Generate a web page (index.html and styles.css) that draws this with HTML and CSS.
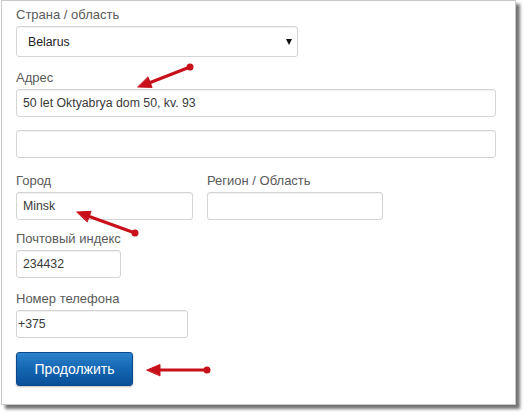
FILE: index.html
```html
<!DOCTYPE html>
<html lang="ru">
<head>
<meta charset="utf-8">
<title>Адрес</title>
<link rel="stylesheet" href="styles.css">
</head>
<body>
<div class="frame">
  <form class="form">
    <div class="group">
      <label class="label">Страна / область</label>
      <div class="select-wrap">
        <select class="control select"><option>Belarus</option></select>
      </div>
    </div>
    <div class="group group--tight">
      <label class="label">Адрес</label>
      <input class="control control--wide" type="text" value="50 let Oktyabrya dom 50, kv. 93">
    </div>
    <div class="group group--loose">
      <input class="control control--wide" type="text" value="">
    </div>
    <div class="row group group--short">
      <div class="col">
        <label class="label">Город</label>
        <input class="control control--city" type="text" value="Minsk">
      </div>
      <div class="col">
        <label class="label">Регион / Область</label>
        <input class="control control--region" type="text" value="">
      </div>
    </div>
    <div class="group">
      <label class="label">Почтовый индекс</label>
      <input class="control control--zip" type="text" value="234432">
    </div>
    <div class="group group--loose">
      <label class="label">Номер телефона</label>
      <input class="control control--phone" type="text" value="+375">
    </div>
    <button class="btn" type="button">Продолжить</button>
  </form>
</div>
<svg class="arrows" width="530" height="418" viewBox="0 0 530 418" aria-hidden="true">
  <g fill="#c8101a" stroke="#c8101a" stroke-linecap="round">
    <line x1="190" y1="67" x2="149" y2="83" stroke-width="3"/>
    <circle cx="190" cy="67" r="3.5" stroke="none"/>
    <polygon points="138,87 152.1,87.4 148.1,77.2" stroke-width="1" stroke-linejoin="round"/>

    <line x1="135" y1="233" x2="88" y2="216" stroke-width="3"/>
    <circle cx="135" cy="233" r="3.5" stroke="none"/>
    <polygon points="77,212 91.1,211.3 87.3,221.6" stroke-width="1" stroke-linejoin="round"/>

    <line x1="207" y1="370" x2="158" y2="370" stroke-width="3"/>
    <circle cx="207" cy="370" r="3.5" stroke="none"/>
    <polygon points="147,370 160,364.5 160,375.5" stroke-width="1" stroke-linejoin="round"/>
  </g>
</svg>
</body>
</html>
```
FILE: styles.css
```css
html, body {
  margin: 0;
  padding: 0;
  background: #ffffff;
}

body {
  position: relative;
  width: 530px;
  height: 418px;
  overflow: hidden;
  font-family: "Liberation Sans", Arial, sans-serif;
}

.frame {
  margin-left: 1px;
  width: 513px;
  height: 403px;
  border: 1px solid #c9c9c9;
  background: #ffffff;
  box-shadow: 4px 4px 3px rgba(0, 0, 0, 0.55);
}

.form {
  display: flex;
  flex-direction: column;
  align-items: flex-start;
  padding: 5px 0 0 14px;
}

.group {
  display: flex;
  flex-direction: column;
  margin-bottom: 12px;
}

.group--tight { margin-bottom: 13px; }
.group--loose { margin-bottom: 14px; }
.group--short { margin-bottom: 10px; }

.row {
  flex-direction: row;
  gap: 14px;
}

.col {
  display: flex;
  flex-direction: column;
}

.label {
  font-size: 13px;
  line-height: 18px;
  color: #5a5a5a;
  margin-bottom: 2px;
}

.control {
  box-sizing: border-box;
  height: 28px;
  margin: 0;
  padding: 0 6px;
  border: 1px solid #d4d4d4;
  border-radius: 3px;
  background: #fff;
  box-shadow: inset 0 1px 1px rgba(0, 0, 0, 0.06);
  font-family: "Liberation Sans", Arial, sans-serif;
  font-size: 12.3px;
  color: #3a3a3a;
  outline: none;
}

.select-wrap {
  position: relative;
  width: 282px;
}

.select-wrap::after {
  content: "";
  position: absolute;
  right: 6px;
  top: 13px;
  border-left: 3.5px solid transparent;
  border-right: 3.5px solid transparent;
  border-top: 6px solid #111;
}

.select {
  -webkit-appearance: none;
  appearance: none;
  width: 282px;
  height: 31px;
  padding: 0 0 0 11px;
  color: #222;
}

.control--wide { width: 480px; }
.control--city { width: 177px; }
.control--region { width: 176px; }
.control--zip { width: 105px; }
.control--phone { width: 172px; padding-left: 1px; }

.btn {
  box-sizing: border-box;
  width: 117px;
  height: 34px;
  margin: 0;
  border: 1px solid #0a4a8c;
  border-radius: 3px;
  background: linear-gradient(to bottom, #2c82cc 0%, #1466b2 50%, #0a5099 100%);
  box-shadow: 0 1px 2px rgba(0, 0, 0, 0.25);
  color: #fff;
  font-family: "Liberation Sans", Arial, sans-serif;
  font-size: 14px;
  cursor: pointer;
}

.arrows {
  position: absolute;
  left: 0;
  top: 0;
  pointer-events: none;
}
```
